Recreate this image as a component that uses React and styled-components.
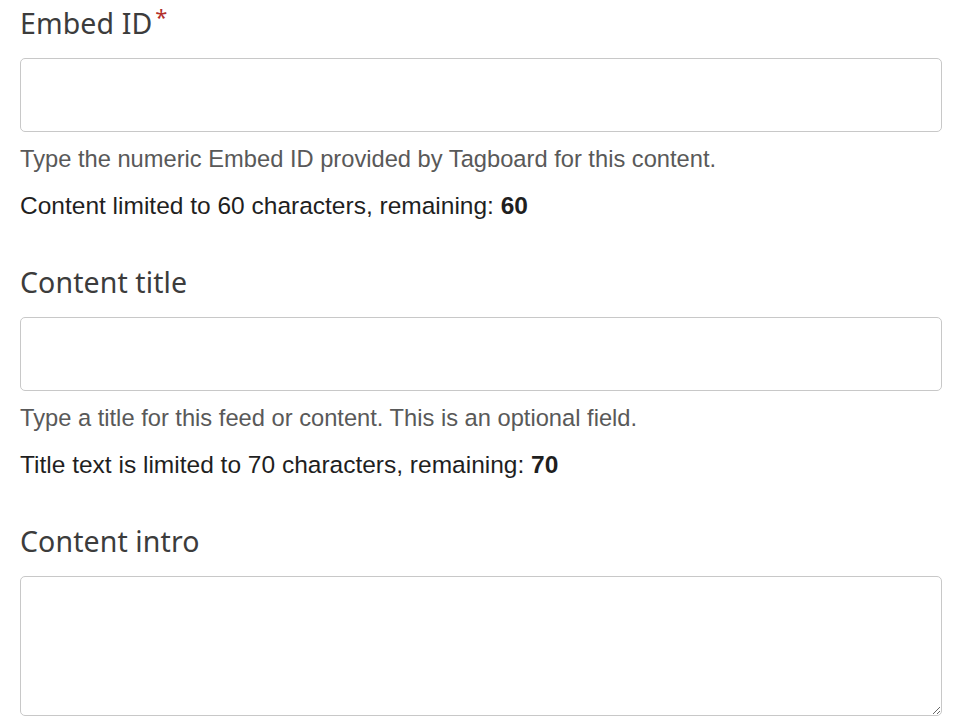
import styled, { createGlobalStyle } from "styled-components";

const GlobalStyle = createGlobalStyle`
  body {
    margin: 0;
    background: #fff;
  }
`;

const Form = styled.form`
  padding: 5px 18px 0 20px;
  display: flex;
  flex-direction: column;
`;

const Field = styled.div`
  display: flex;
  flex-direction: column;
  margin-bottom: 44px;

  &:last-child {
    margin-bottom: 0;
  }
`;

const Label = styled.label`
  font-family: "Noto Sans", sans-serif;
  font-size: 28.5px;
  line-height: 36px;
  color: #3c3c3c;
  margin-bottom: 17px;
  letter-spacing: 0.1px;
`;

const Required = styled.span`
  color: #b3302b;
  font-size: 22px;
  vertical-align: top;
  position: relative;
  top: -7px;
  margin-left: 3px;
`;

const TextInput = styled.input`
  box-sizing: border-box;
  height: 74px;
  width: 100%;
  border: 1.5px solid #c8c8c8;
  border-radius: 5px;
  padding: 0 14px;
  font-size: 24px;
  font-family: "Liberation Sans", Arial, sans-serif;
  outline: none;
`;

const TextArea = styled.textarea`
  box-sizing: border-box;
  height: 140px;
  width: 100%;
  border: 1.5px solid #c8c8c8;
  border-radius: 5px;
  padding: 10px 14px;
  font-size: 24px;
  font-family: "Liberation Sans", Arial, sans-serif;
  outline: none;
`;

const Help = styled.div`
  font-family: "Liberation Sans", Arial, sans-serif;
  font-size: ${(p) => (p.$muted ? 23.7 : 24.5)}px;
  line-height: 28px;
  color: ${(p) => (p.$muted ? "#595959" : "#1f1f1f")};
  margin-top: ${(p) => p.$gap}px;
`;

export default function App() {
  return (
    <>
      <GlobalStyle />
      <Form>
        <Field>
          <Label>
            Embed ID<Required>*</Required>
          </Label>
          <TextInput type="text" />
          <Help $muted $gap={13}>
            Type the numeric Embed ID provided by Tagboard for this content.
          </Help>
          <Help $gap={19}>
            Content limited to 60 characters, remaining: <b>60</b>
          </Help>
        </Field>
        <Field>
          <Label>Content title</Label>
          <TextInput type="text" />
          <Help $muted $gap={13}>
            Type a title for this feed or content. This is an optional field.
          </Help>
          <Help $gap={19}>
            Title text is limited to 70 characters, remaining: <b>70</b>
          </Help>
        </Field>
        <Field>
          <Label>Content intro</Label>
          <TextArea />
        </Field>
      </Form>
    </>
  );
}
